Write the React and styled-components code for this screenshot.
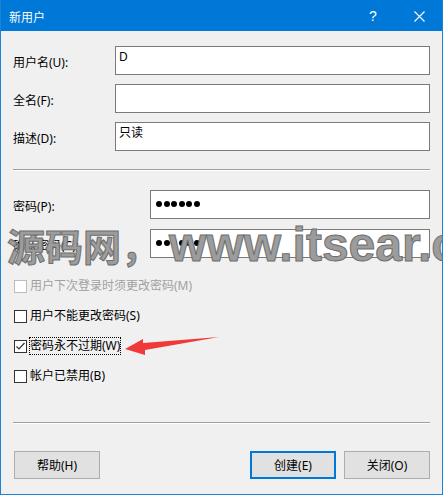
import styled, { createGlobalStyle } from 'styled-components';

const GlobalStyle = createGlobalStyle`
  body {
    margin: 0;
    background: #f0f0f0;
    font-family: "Noto Sans", "Noto Sans CJK SC", sans-serif;
    font-size: 12px;
    color: #000;
  }
`;

const Window = styled.div`
  position: relative;
  width: 443px;
  height: 495px;
  box-sizing: border-box;
  border: 1px solid #1883d7;
  border-top: 1px solid #0078d7;
  display: flex;
  flex-direction: column;
  overflow: hidden;
`;

const TitleBar = styled.div`
  height: 30px;
  background: #0078d7;
  display: flex;
  align-items: center;
  padding-left: 8px;
  color: #fff;
`;

const Title = styled.div`
  flex: 1;
  font-size: 12px;
  font-family: "Noto Sans CJK SC", sans-serif;
`;

const TitleButton = styled.div`
  width: ${p => p.w}px;
  height: 30px;
  display: flex;
  align-items: center;
  justify-content: center;
  font-size: 14px;
  font-family: "Liberation Sans", sans-serif;
`;

const Body = styled.div`
  flex: 1;
  background: #f0f0f0;
  padding: 15px 12px 15px 12px;
  display: flex;
  flex-direction: column;
`;

const FormGrid = styled.div`
  display: grid;
  grid-template-columns: ${p => p.labelWidth}px 1fr;
  row-gap: ${p => p.gap}px;
  align-items: center;
`;

const Label = styled.div`
  padding-top: 2px;
  white-space: nowrap;
`;

const TextBox = styled.div`
  height: 29px;
  box-sizing: border-box;
  border: 1px solid #7a7a7a;
  background: #fff;
  line-height: 16px;
  display: flex;
  align-items: ${p => (p.dots ? 'center' : 'flex-start')};
  gap: 1.5px;
  padding-left: ${p => (p.dots ? 5 : 3)}px;
  padding-top: ${p => (p.dots ? 0 : 2)}px;
`;

const Dot = styled.span`
  width: 6px;
  height: 6px;
  border-radius: 50%;
  background: #000;
  margin-top: -2px;
`;

const Separator = styled.div`
  height: 1px;
  background: #a0a0a0;
  border-bottom: 1px solid #fff;
  margin: ${p => p.top}px 0 ${p => p.bottom}px;
`;

const CheckList = styled.div`
  display: flex;
  flex-direction: column;
  gap: 12px;
  margin-top: 19px;
`;

const CheckRow = styled.div`
  display: flex;
  align-items: center;
  height: 18px;
  gap: 2px;
  color: ${p => (p.disabled ? '#a0a0a0' : '#000')};
`;

const Box = styled.div`
  width: 13px;
  height: 13px;
  box-sizing: border-box;
  border: 1px solid ${p => (p.disabled ? '#bcbcbc' : '#333')};
  background: #fff;
  display: flex;
  align-items: center;
  justify-content: center;
  margin-left: 1px;
`;

const CheckText = styled.span`
  height: 18px;
  line-height: 18px;
  padding: 0 1px;
  box-sizing: border-box;
  outline: ${p => (p.focused ? '1px dotted #000' : 'none')};
  outline-offset: -1px;
`;

const Spacer = styled.div`
  flex: 1;
`;

const ButtonRow = styled.div`
  display: flex;
  padding: 0 0 0 1px;
  gap: 8px;
`;

const Button = styled.div`
  width: 86px;
  height: 28px;
  box-sizing: border-box;
  background: #e1e1e1;
  border: ${p => (p.primary ? '2px solid #0078d7' : '1px solid #adadad')};
  display: flex;
  align-items: center;
  justify-content: center;
  margin-left: ${p => (p.pushRight ? 'auto' : '0')};
`;

const Watermark = styled.div`
  position: absolute;
  left: 6px;
  top: 216px;
  display: flex;
  align-items: baseline;
  white-space: nowrap;
  pointer-events: none;
  color: #9c9c9c;
  -webkit-text-stroke: 1px #6e6e6e;
`;

const WmCjk = styled.span`
  font-family: "Noto Sans CJK SC", sans-serif;
  font-weight: 700;
  font-size: 38px;
`;

const WmLatin = styled.span`
  font-family: "Liberation Sans", sans-serif;
  font-weight: 700;
  font-size: 48px;
  margin-left: 10px;
`;

const Arrow = styled.svg`
  position: absolute;
  left: 0;
  top: 0;
  pointer-events: none;
`;

function Check({ checked, disabled, focused, children }) {
  return (
    <CheckRow disabled={disabled}>
      <Box disabled={disabled}>
        {checked && (
          <svg width="11" height="11" viewBox="0 0 11 11">
            <polyline points="1.5,5.5 4,8 9.5,2" fill="none" stroke="#333" strokeWidth="1.2" />
          </svg>
        )}
      </Box>
      <CheckText focused={focused}>{children}</CheckText>
    </CheckRow>
  );
}

function Password() {
  return (
    <TextBox dots>
      {[0, 1, 2, 3, 4, 5].map(i => <Dot key={i} />)}
    </TextBox>
  );
}

export default function App() {
  return (
    <>
      <GlobalStyle />
      <Window>
        <TitleBar>
          <Title>新用户</Title>
          <TitleButton w={46}>?</TitleButton>
          <TitleButton w={46}>
            <svg width="11" height="11" viewBox="0 0 11 11">
              <path d="M0.5 0.5 L10.5 10.5 M10.5 0.5 L0.5 10.5" stroke="#fff" strokeWidth="1.1" />
            </svg>
          </TitleButton>
        </TitleBar>
        <Body>
          <FormGrid labelWidth={102} gap={9}>
            <Label>用户名(U):</Label>
            <TextBox>D</TextBox>
            <Label>全名(F):</Label>
            <TextBox />
            <Label>描述(D):</Label>
            <TextBox>只读</TextBox>
          </FormGrid>
          <Separator top={18} bottom={19} />
          <FormGrid labelWidth={137} gap={10}>
            <Label>密码(P):</Label>
            <Password />
            <Label>确认密码(C):</Label>
            <Password />
          </FormGrid>
          <CheckList>
            <Check disabled>用户下次登录时须更改密码(M)</Check>
            <Check>用户不能更改密码(S)</Check>
            <Check checked focused>密码永不过期(W)</Check>
            <Check>帐户已禁用(B)</Check>
          </CheckList>
          <Spacer />
          <Separator top={0} bottom={27} />
          <ButtonRow>
            <Button>帮助(H)</Button>
            <Button primary pushRight>创建(E)</Button>
            <Button>关闭(O)</Button>
          </ButtonRow>
        </Body>
        <Watermark>
          <WmCjk>源码网，</WmCjk>
          <WmLatin>www.itsear.com</WmLatin>
        </Watermark>
        <Arrow width="443" height="495">
          <polygon points="124,348 142,338 142,342 218,336 144,349 144,354" fill="#f03a3a" />
        </Arrow>
      </Window>
    </>
  );
}
